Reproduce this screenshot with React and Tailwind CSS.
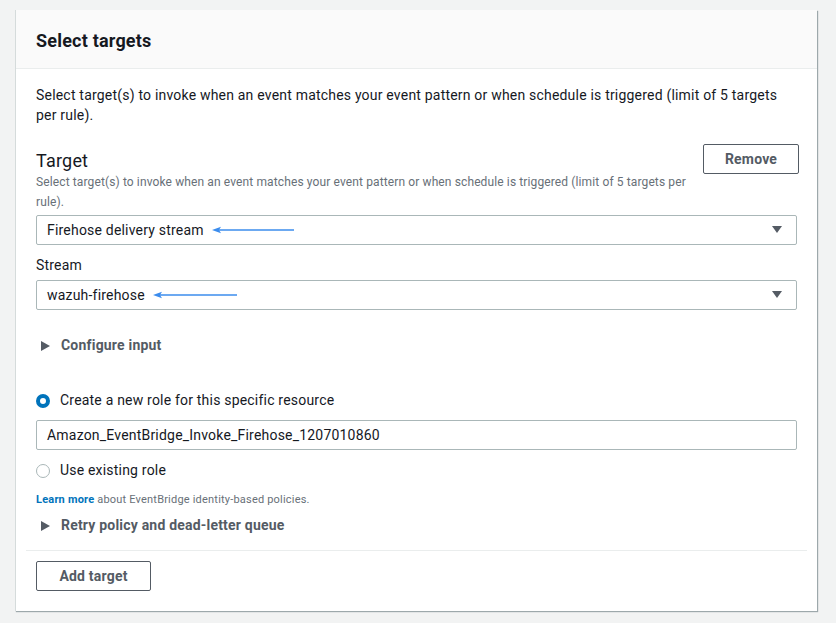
const Arrow = ({ width }) => (
    <svg width={width} height="8" viewBox={`0 0 ${width} 8`} className="ml-2 shrink-0">
        <line x1="4" y1="4" x2={width} y2="4" stroke="#3b8ced" strokeWidth="1.5" />
        <path d="M0 4 L9 0.8 L7 4 L9 7.2 Z" fill="#3b8ced" />
    </svg>
)

const Caret = () => (
    <svg width="10" height="8" viewBox="0 0 10 8">
        <path d="M0 0 H10 L5 7 Z" fill="#545b64" />
    </svg>
)

const Expander = ({ label }) => (
    <div className="flex items-center gap-[11px] pl-[5px] text-[14px] font-bold text-[#545b64]">
        <svg width="9" height="10" viewBox="0 0 9 10">
            <path d="M0 0 L9 5 L0 10 Z" fill="#545b64" />
        </svg>
        <span>{label}</span>
    </div>
)

const SelectBox = ({ value, arrow }) => (
    <div className="flex items-center justify-between h-[30px] border border-[#aab7b8] rounded-[2px] pl-[10px] pr-[14px] text-[14px] text-[#16191f]">
        <div className="flex items-center">
            <span>{value}</span>
            <Arrow width={arrow} />
        </div>
        <Caret />
    </div>
)

const Radio = ({ checked, label }) => (
    <div className="flex items-center gap-[10px] text-[14px] text-[#16191f]">
        {checked ? (
            <span className="w-[14px] h-[14px] rounded-full border-[4px] border-[#0073bb] bg-white" />
        ) : (
            <span className="w-[14px] h-[14px] rounded-full border border-[#aab7b8] bg-white" />
        )}
        <span>{label}</span>
    </div>
)

export default function App() {
    return (
        <div className="min-h-[623px] bg-[#f2f3f3] pt-[10px] pl-[15px] pr-[19px] tracking-[0.2px]" style={{ fontFamily: "Roboto, 'Open Sans', sans-serif" }}>
            <div className="bg-white border-l border-[#d5dbdb] shadow-[1px_1px_1px_0_rgba(0,28,36,0.35)]">
                {/* header */}
                <div className="h-[59px] bg-[#fafafa] border-b border-[#eaeded] flex items-center px-[20px] pt-[2px]">
                    <h2 className="text-[18px] font-bold text-[#16191f]">Select targets</h2>
                </div>

                <div className="px-[20px] pt-[16px]">
                    <p className="text-[14px] leading-[20px] text-[#16191f]">
                        Select target(s) to invoke when an event matches your event pattern or when schedule is triggered (limit of 5 targets per rule).
                    </p>

                    <div className="mt-[24px] flex justify-between items-start">
                        <div className="w-[662px]">
                            <div className="text-[18px] leading-[22px] text-[#16191f] pt-[1px]">Target</div>
                            <div className="text-[12px] leading-[20px] text-[#687078] tracking-[0.12px]">
                                Select target(s) to invoke when an event matches your event pattern or when schedule is triggered (limit of 5 targets per rule).
                            </div>
                        </div>
                        <button className="shrink-0 mt-[-5px] mr-[-2px] h-[30px] w-[96px] border border-[#545b64] rounded-[2px] text-[14px] font-bold text-[#545b64]">
                            Remove
                        </button>
                    </div>

                    <div className="mt-[3px]">
                        <SelectBox value="Firehose delivery stream" arrow={82} />
                    </div>

                    <div className="mt-[10px] text-[14px] text-[#16191f] leading-[20px]">Stream</div>
                    <div className="mt-[5px]">
                        <SelectBox value="wazuh-firehose" arrow={84} />
                    </div>

                    <div className="mt-[25px]">
                        <Expander label="Configure input" />
                    </div>

                    <div className="mt-[34px]">
                        <Radio checked label="Create a new role for this specific resource" />
                    </div>
                    <div className="mt-[9px] h-[30px] border border-[#aab7b8] rounded-[2px] flex items-center pl-[10px] text-[14px] text-[#16191f]">
                        Amazon_EventBridge_Invoke_Firehose_1207010860
                    </div>
                    <div className="mt-[10px]">
                        <Radio label="Use existing role" />
                    </div>
                    <div className="mt-[11px] text-[11px] text-[#687078] leading-[16px]">
                        <span className="font-bold text-[#0073bb]">Learn more</span> about EventBridge identity-based policies.
                    </div>
                    <div className="mt-[7px]">
                        <Expander label="Retry policy and dead-letter queue" />
                    </div>
                </div>

                <div className="mx-[10px] mt-[14px] border-t border-[#eaeded]" />
                <div className="px-[20px] pt-[10px] pb-[20px]">
                    <button className="h-[30px] w-[115px] border border-[#545b64] rounded-[2px] text-[14px] font-bold text-[#545b64]">
                        Add target
                    </button>
                </div>
            </div>
        </div>
    )
}
